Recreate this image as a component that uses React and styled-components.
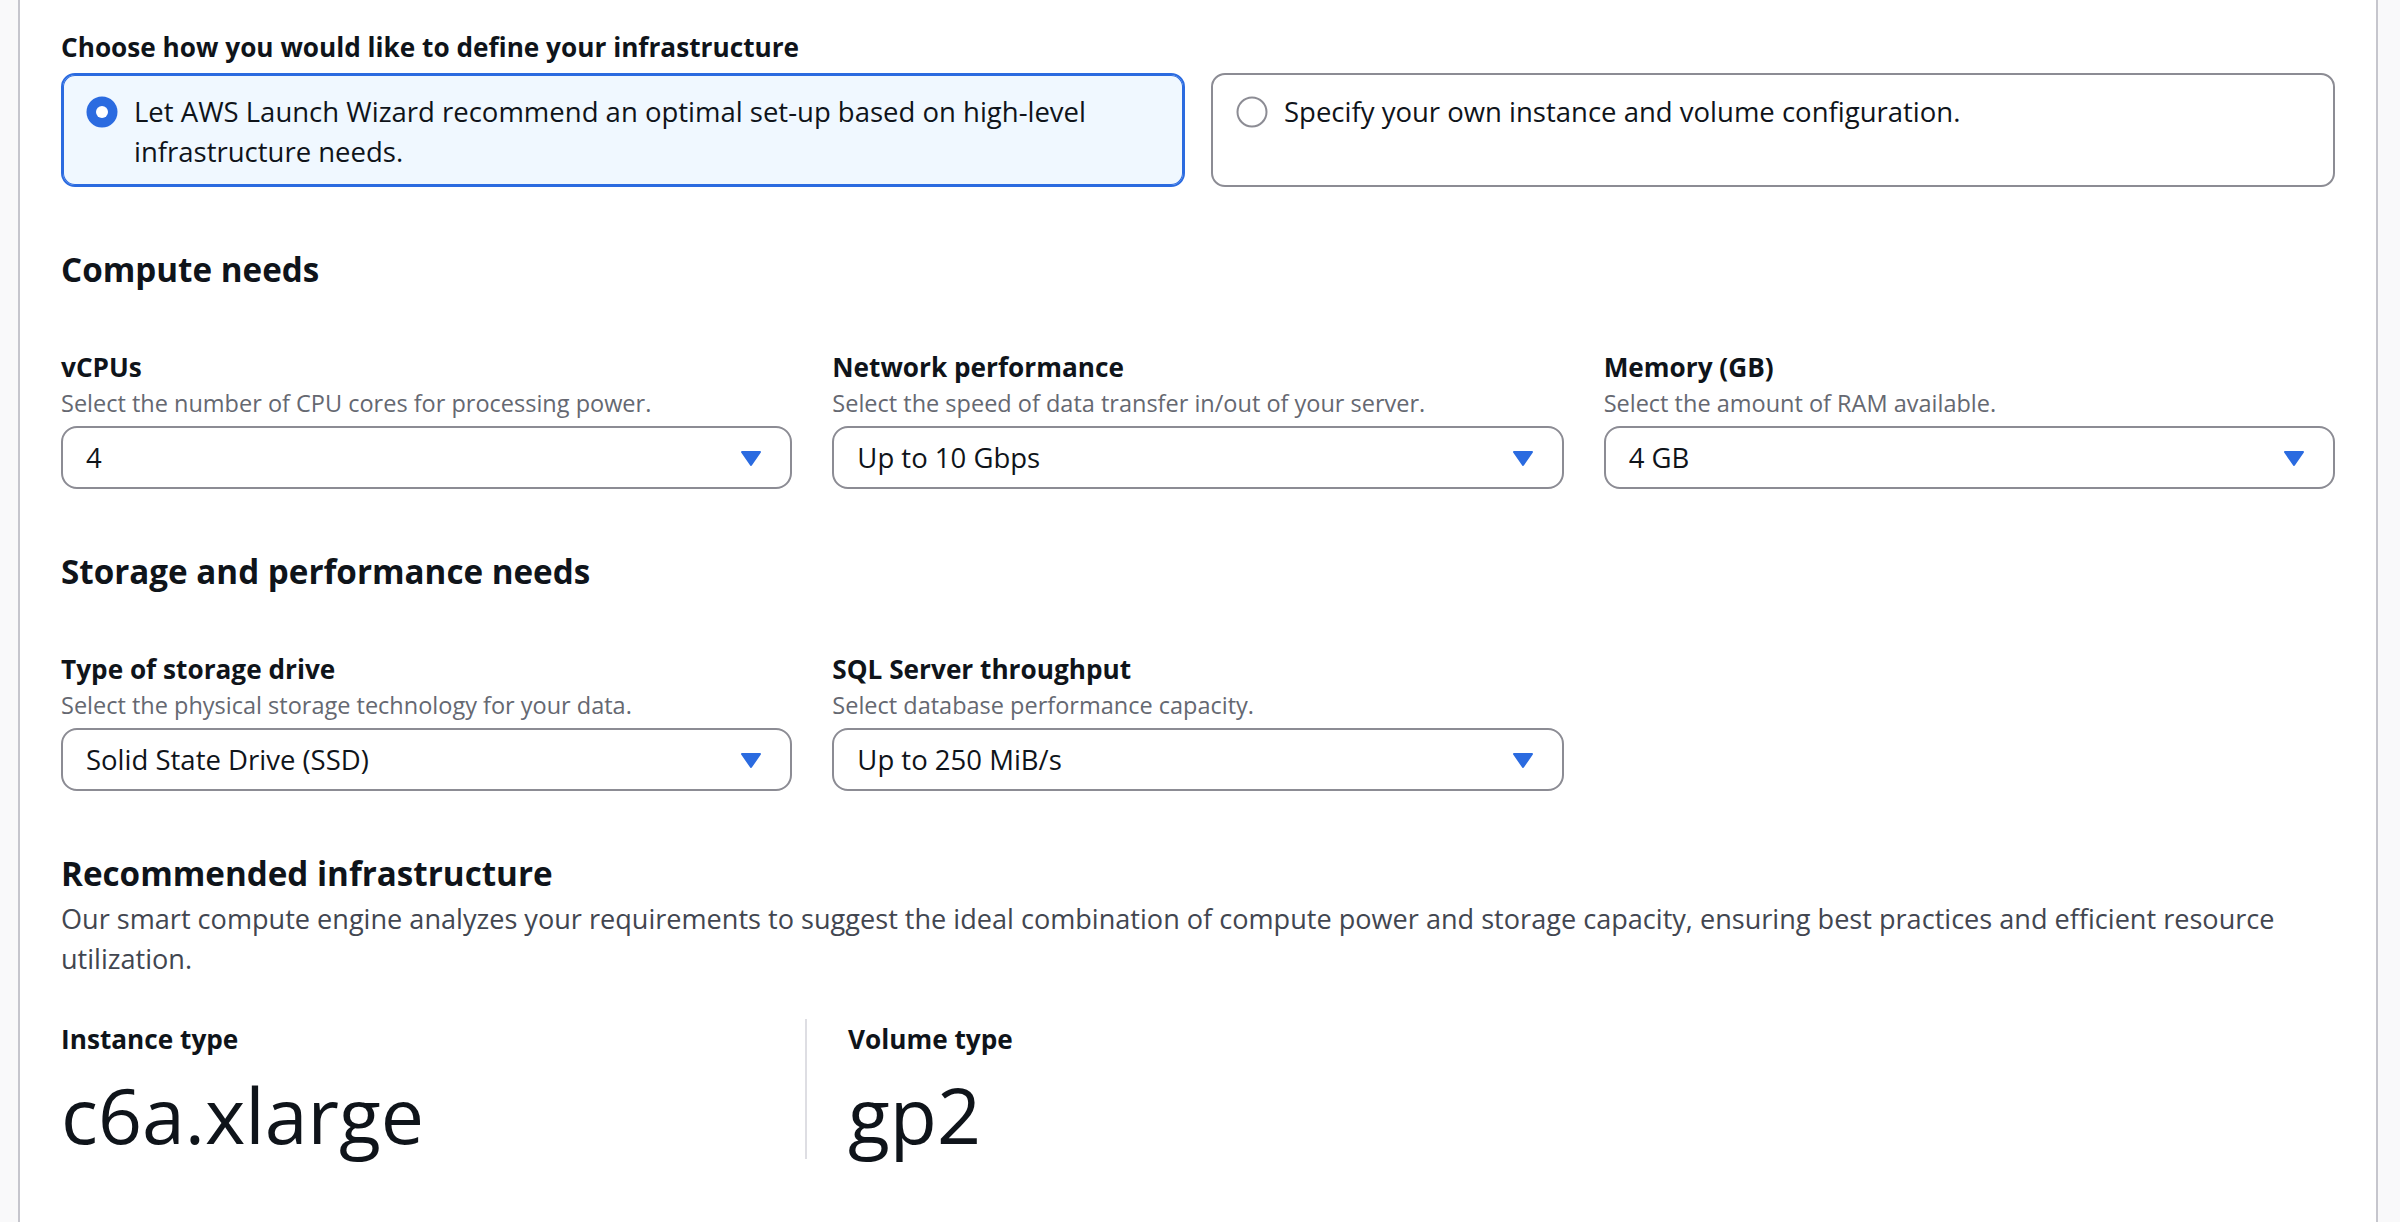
import React from "react";
import styled, { createGlobalStyle } from "styled-components";

const GlobalStyle = createGlobalStyle`
  html, body {
    margin: 0;
    padding: 0;
  }
  body {
    font-family: "Open Sans", "Noto Sans", "Liberation Sans", sans-serif;
    color: #0f141a;
    background: #f9f9fa;
    -webkit-font-smoothing: antialiased;
  }
  * { box-sizing: border-box; }
`;

const Page = styled.div`
  display: flex;
  min-height: 100vh;
  padding: 0 22px 0 18px;
  background: #f9f9fa;
`;

const Panel = styled.main`
  flex: 1;
  background: #ffffff;
  border-left: 2px solid #c6c6cd;
  border-right: 2px solid #c6c6cd;
  padding: 25px 41px 0 41px;
  display: flex;
  flex-direction: column;
`;

const GroupLabel = styled.div`
  font-size: 26.2px;
  font-weight: 700;
  line-height: 44px;
`;

const TileGrid = styled.div`
  display: grid;
  grid-template-columns: 1fr 1fr;
  column-gap: 26px;
  margin-top: 4px;
`;

const Tile = styled.label`
  display: flex;
  align-items: flex-start;
  gap: 16px;
  min-height: 114px;
  padding: 17px 23px 13px 23px;
  border-radius: 14px;
  border: 2px solid ${(p) => (p.$selected ? "#2b6be0" : "#8c8c94")};
  box-shadow: ${(p) => (p.$selected ? "inset 0 0 0 1px #2b6be0" : "none")};
  background: ${(p) => (p.$selected ? "#f0f8ff" : "#ffffff")};
  cursor: pointer;
`;

const RadioWrap = styled.span`
  flex: none;
  width: 32px;
  height: 32px;
  margin-top: 4px;
  display: block;
`;

const TileText = styled.span`
  font-size: 27.5px;
  line-height: 40px;
  color: #0f141a;
`;

const SectionHeading = styled.h2`
  margin: 61px 0 0 0;
  font-size: 33.2px;
  font-weight: 700;
  line-height: 44px;
  color: #0f141a;
`;

const FieldGrid = styled.div`
  display: grid;
  grid-template-columns: repeat(3, 1fr);
  column-gap: 40px;
  margin-top: 55px;
`;

const Field = styled.div`
  display: flex;
  flex-direction: column;
  min-width: 0;
`;

const FieldLabel = styled.div`
  font-size: 26.2px;
  font-weight: 700;
  line-height: 40px;
  color: #0f141a;
`;

const FieldDesc = styled.div`
  font-size: 23.5px;
  line-height: 32px;
  color: #656871;
`;

const SelectBox = styled.div`
  margin-top: 7px;
  height: 63px;
  border: 2px solid #8c8c94;
  border-radius: 16px;
  background: #ffffff;
  padding: 0 23px;
  display: flex;
  align-items: center;
  justify-content: space-between;
  cursor: pointer;
`;

const SelectValue = styled.span`
  font-size: 27.5px;
  line-height: 40px;
  color: #0f141a;
`;

const Paragraph = styled.p`
  margin: 3px 0 0 0;
  font-size: 27.1px;
  line-height: 40px;
  color: #424650;
`;

const KVRow = styled.div`
  display: grid;
  grid-template-columns: 744px 1fr;
  margin-top: 40px;
`;

const KVColumn = styled.div`
  display: flex;
  flex-direction: column;
  padding-left: ${(p) => (p.$divided ? "41px" : "0")};
  border-left: ${(p) => (p.$divided ? "2px solid #dedee3" : "none")};
`;

const KVValue = styled.div`
  margin-top: 11px;
  font-size: 77px;
  font-weight: 400;
  line-height: 89px;
  color: #0f141a;
`;

const Radio = ({ checked }) => (
  <RadioWrap>
    <svg width="32" height="32" viewBox="0 0 32 32">
      {checked ? (
        <>
          <circle cx="16" cy="16" r="15.5" fill="#2b6be0" />
          <circle cx="16" cy="16" r="6" fill="#ffffff" />
        </>
      ) : (
        <circle cx="16" cy="16" r="14.5" fill="#ffffff" stroke="#8c8c94" strokeWidth="2" />
      )}
    </svg>
  </RadioWrap>
);

const Caret = () => (
  <svg width="32" height="32" viewBox="0 0 32 32">
    <path
      d="M7 10 H25 L16 23 Z"
      fill="#2b6be0"
      stroke="#2b6be0"
      strokeWidth="2"
      strokeLinejoin="round"
    />
  </svg>
);

const SelectField = ({ label, desc, value }) => (
  <Field>
    <FieldLabel>{label}</FieldLabel>
    <FieldDesc>{desc}</FieldDesc>
    <SelectBox>
      <SelectValue>{value}</SelectValue>
      <Caret />
    </SelectBox>
  </Field>
);

export default function App() {
  return (
    <>
      <GlobalStyle />
      <Page>
        <Panel>
          <GroupLabel>Choose how you would like to define your infrastructure</GroupLabel>
          <TileGrid>
            <Tile $selected>
              <Radio checked />
              <TileText>
                Let AWS Launch Wizard recommend an optimal set-up based on high-level
                infrastructure needs.
              </TileText>
            </Tile>
            <Tile>
              <Radio />
              <TileText>Specify your own instance and volume configuration.</TileText>
            </Tile>
          </TileGrid>

          <SectionHeading>Compute needs</SectionHeading>
          <FieldGrid>
            <SelectField
              label="vCPUs"
              desc="Select the number of CPU cores for processing power."
              value="4"
            />
            <SelectField
              label="Network performance"
              desc="Select the speed of data transfer in/out of your server."
              value="Up to 10 Gbps"
            />
            <SelectField
              label="Memory (GB)"
              desc="Select the amount of RAM available."
              value="4 GB"
            />
          </FieldGrid>

          <SectionHeading>Storage and performance needs</SectionHeading>
          <FieldGrid>
            <SelectField
              label="Type of storage drive"
              desc="Select the physical storage technology for your data."
              value="Solid State Drive (SSD)"
            />
            <SelectField
              label="SQL Server throughput"
              desc="Select database performance capacity."
              value="Up to 250 MiB/s"
            />
          </FieldGrid>

          <SectionHeading>Recommended infrastructure</SectionHeading>
          <Paragraph>
            Our smart compute engine analyzes your requirements to suggest the ideal combination of
            compute power and storage capacity, ensuring best practices and efficient resource
            utilization.
          </Paragraph>

          <KVRow>
            <KVColumn>
              <FieldLabel>Instance type</FieldLabel>
              <KVValue>c6a.xlarge</KVValue>
            </KVColumn>
            <KVColumn $divided>
              <FieldLabel>Volume type</FieldLabel>
              <KVValue>gp2</KVValue>
            </KVColumn>
          </KVRow>
        </Panel>
      </Page>
    </>
  );
}
